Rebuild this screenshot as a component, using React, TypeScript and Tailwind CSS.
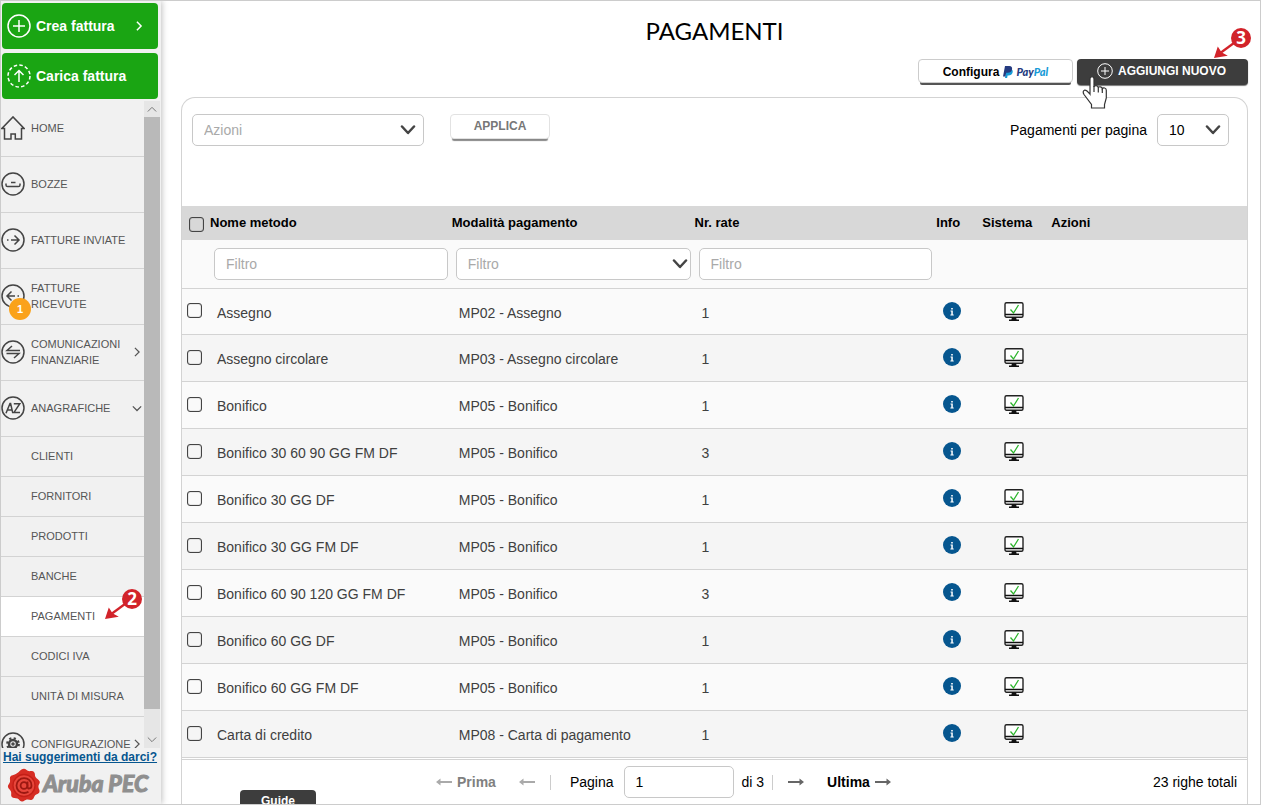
import { useState } from "react";
import type { ReactNode } from "react";

const payments = [
  { id: 1, name: "Assegno", mode: "MP02 - Assegno", rate: 1 },
  { id: 2, name: "Assegno circolare", mode: "MP03 - Assegno circolare", rate: 1 },
  { id: 3, name: "Bonifico", mode: "MP05 - Bonifico", rate: 1 },
  { id: 4, name: "Bonifico 30 60 90 GG FM DF", mode: "MP05 - Bonifico", rate: 3 },
  { id: 5, name: "Bonifico 30 GG DF", mode: "MP05 - Bonifico", rate: 1 },
  { id: 6, name: "Bonifico 30 GG FM DF", mode: "MP05 - Bonifico", rate: 1 },
  { id: 7, name: "Bonifico 60 90 120 GG FM DF", mode: "MP05 - Bonifico", rate: 3 },
  { id: 8, name: "Bonifico 60 GG DF", mode: "MP05 - Bonifico", rate: 1 },
  { id: 9, name: "Bonifico 60 GG FM DF", mode: "MP05 - Bonifico", rate: 1 },
  { id: 10, name: "Carta di credito", mode: "MP08 - Carta di pagamento", rate: 1 },
];

const subItems = [
  "CLIENTI",
  "FORNITORI",
  "PRODOTTI",
  "BANCHE",
  "PAGAMENTI",
  "CODICI IVA",
  "UNITÀ DI MISURA",
];

const fieldClass =
  "h-8 w-full rounded-[5px] border border-[#c8c8c8] bg-white px-[11px] text-sm text-black outline-none placeholder:text-[#a9a9a9]";

const checkClass =
  "block size-[15px] appearance-none rounded-[3px] border border-[#444] shadow-[inset_0_0_1px_#444] checked:bg-[#505050]";

function Circle({ children }: { children: ReactNode }) {
  return (
    <svg viewBox="0 0 24 24" className="size-6" fill="none" stroke="#444" strokeWidth="1.5">
      <circle cx="12" cy="12" r="11" />
      {children}
    </svg>
  );
}

function HomeIcon() {
  return (
    <svg viewBox="0 0 24 24" className="size-6" fill="none" stroke="#444" strokeWidth="1.5">
      <path d="M3.5 12.5H.9L12 .9l11.1 11.6h-2.6v10.6h-6.2v-5.2H10v5.2H3.5z" />
    </svg>
  );
}

function BozzeIcon() {
  return (
    <Circle>
      <path d="M5 11.5v1.4c0 1 .6 1.6 1.6 1.6h10.8c1 0 1.6-.6 1.6-1.6v-1.4" />
      <path d="M10 10.5h4.5" />
    </Circle>
  );
}

function InviateIcon() {
  return (
    <Circle>
      <path d="M10 12h8M13.5 7.5 18 12l-4.500 4.500M6 12h1.500" />
    </Circle>
  );
}

function RicevuteIcon() {
  return (
    <Circle>
      <path d="M14 12H6M10.500 7.500 6 12l4.500 4.500M16.500 12H18" />
    </Circle>
  );
}

function ComunicazioniIcon() {
  return (
    <Circle>
      <path d="M19 10.500H6l5-4.500M5.500 13.500H18l-5 4.500" />
    </Circle>
  );
}

function AnagraficheIcon() {
  return (
    <Circle>
      <path d="M5 17.200 9 7.500h.6l2.200 9.700M6.500 14h4.600M12.800 7.700h6L13 16.400h6" />
    </Circle>
  );
}

function GearIcon() {
  return (
    <Circle>
      <circle cx="12" cy="12" r="4" strokeWidth="2.500" />
      <circle cx="12" cy="12" r="5.800" strokeWidth="2.200" strokeDasharray="2.200 2.355" />
      <circle cx="12" cy="12" r="1" />
    </Circle>
  );
}

function Chevron({ className, d = "m1 3 5 5 5-5", width = 1.5 }: { className?: string; d?: string; width?: number }) {
  return (
    <svg viewBox="0 0 12 12" className={className} fill="none" stroke="currentColor" strokeWidth={width}>
      <path d={d} />
    </svg>
  );
}

function SelectArrow({ className }: { className: string }) {
  return (
    <svg
      viewBox="0 0 16 10"
      className={`pointer-events-none absolute top-[11px] h-[10px] w-4 ${className}`}
      fill="none"
      stroke="#444"
      strokeWidth="2.500"
      strokeLinecap="round"
      strokeLinejoin="round"
    >
      <path d="m2 1.500 6 6.500 6-6.500" />
    </svg>
  );
}

function Arrow({ left = false, color }: { left?: boolean; color: string }) {
  return (
    <svg viewBox="0 0 16 8" className="h-2 w-4" fill={color}>
      {left ? <path d="M0 4 4.500.5v2.400H16v2.200H4.500v2.400z" /> : <path d="m16 4-4.500-3.500v2.400H0v2.200h11.500v2.400z" />}
    </svg>
  );
}

function Marker({ label, className }: { label: string; className: string }) {
  return (
    <svg viewBox="0 0 40 34" className={`pointer-events-none absolute z-10 h-[34px] w-10 ${className}`}>
      <path d="M23 15.500 8 26.500" stroke="#d2232a" strokeWidth="2.200" />
      <path d="M1 32 4.800 20.500 8.500 26.200 14.800 29.800z" fill="#d2232a" />
      <circle cx="28" cy="12" r="10" fill="#d2232a" />
      <text x="28" y="18" textAnchor="middle" fill="#fff" fontSize="17" fontWeight="700" fontFamily="'Open Sans', sans-serif">
        {label}
      </text>
    </svg>
  );
}

function HandCursor() {
  return (
    <svg
      viewBox="0 0 26 33"
      className="pointer-events-none absolute top-[17px] left-[5px] z-10 h-[33px] w-[26px]"
      fill="#fff"
      stroke="#333"
      strokeWidth="1.200"
    >
      <path d="M9.500 32v-3.500L2 18.500c-1.300-2-1-3.800.5-4.300 1.600-.4 3 .8 5.500 4V3c0-3 4-3 4 0v8c.4-2 4-2 4.300.7.600-1.500 3.800-1.200 4 1 .8-1.300 4-1 4 1.500V22L22.500 28.500V32z" />
      <path d="M12 10v6M16.300 11.500V16.500M20.300 12.700V17" fill="none" />
    </svg>
  );
}

function PayPalMark() {
  return (
    <svg viewBox="0 0 10 12" className="h-3 w-[10px]">
      <path d="M3.500 3h4.800c1.300.7 1.700 2 1.300 3.500-.5 2-2 3-4.200 3h-.8L4.100 12H2z" fill="#179bd7" />
      <path d="M2 0h4.300c2.200 0 3.200 1.300 2.700 3.400C8.500 5.700 7 6.700 4.700 6.700H3.200L2.400 10.500H0z" fill="#253b80" />
    </svg>
  );
}

function InfoIcon() {
  return (
    <svg viewBox="0 0 18 18" className="size-[18px]">
      <circle cx="9" cy="9" r="9" fill="#06568f" />
      <path d="M8.200 6h1.600v1.400H8.200zM7.500 8.500H9.800v4h.9v.9H7.400v-.9h.9V9.400h-.8z" fill="#fff" />
    </svg>
  );
}

function MonitorIcon() {
  return (
    <svg viewBox="0 0 20 20" className="size-5" fill="none">
      <rect x="1" y="1.700" width="18" height="14.600" rx="1.500" fill="#fff" stroke="#222" strokeWidth="1.400" />
      <path d="M1 13.500h18" stroke="#111" strokeWidth="1.500" />
      <path d="M8 16.300h4l.6 2.200H15V20H5v-1.500h2.400z" fill="#111" />
      <path d="m6.500 8.500 3 3.500 5-8" stroke="#2db52d" strokeWidth="1.300" />
    </svg>
  );
}

function SealLogo() {
  return (
    <svg viewBox="0 0 34 34" className="size-[34px]" fill="none">
      <path
        d="M17 .8c2 0 2.600 2 4.600 2.300 2 .2 4-.6 5.400.9 1.500 1.500.5 3.300 1.500 5 1 1.900 3.800 2.600 4.300 4.800.4 1.800-1.500 2.800-1.400 4.900 0 2 1.800 3.500 1 5.500-.8 1.900-2.900 1.500-4.300 3.100-1.300 1.500-1.100 3.800-3.200 4.500-2 .7-3.200-.8-5.100-.3-1.900.4-3 2.300-5.100 1.900-2.100-.3-2.300-2.200-4.200-3-1.900-.9-4.300.2-5.700-1.500-1.300-1.600-.1-3.400-.8-5.400-.7-1.800-3-2.700-3.100-4.900-.1-2 1.800-2.800 2.100-4.800.4-2-.8-3.900.6-5.600 1.200-1.500 3-.8 4.700-2C12.300 5 13 .8 17 .8z"
        fill="#d62d24"
      />
      <circle cx="17" cy="17.500" r="11" fill="#e8463b" stroke="#c41f17" strokeWidth="1.300" />
      <circle cx="17" cy="17.500" r="3.400" stroke="#9c1811" strokeWidth="1.800" />
      <path
        d="M20.500 13.500v5.200c0 2.800 4 2.300 4-1.300 0-4.300-3.200-7.200-7.400-7.200-4.300 0-7.600 3.200-7.600 7.400s3.200 7.400 7.500 7.400c1.800 0 3.300-.5 4.500-1.300"
        stroke="#9c1811"
        strokeWidth="1.800"
      />
    </svg>
  );
}

function NavItem({ icon, label, chevron, badge }: { icon: ReactNode; label: string; chevron?: string; badge?: string }) {
  return (
    <li>
      <a href="#" className="flex h-14 items-center border-b border-[#d3d3d3] pb-0.5">
        <span className="relative mr-1.5 shrink-0">
          {icon}
          {badge && (
            <span className="absolute top-[14px] left-2 flex size-[22px] items-center justify-center rounded-full bg-[#faa21b] text-[11px] font-bold text-white">
              {badge}
            </span>
          )}
        </span>
        <span className="max-w-[100px]">{label}</span>
        {chevron && (
          <Chevron
            className="mr-0.5 ml-auto size-[10px] shrink-0"
            d={chevron === "down" ? "m1 4 5 5 5-5" : "m3.500 1 5 5-5 5"}
          />
        )}
      </a>
    </li>
  );
}

function Sidebar() {
  return (
    <aside className="z-10 flex w-40 shrink-0 flex-col bg-[#f1f1f1] shadow-[1px_0_6px_rgba(0,0,0,0.25)]">
      <div className="flex flex-col gap-1 pt-0.5 pr-[3px] pb-0.5 pl-px">
        <button className="flex h-[46px] items-center gap-1 rounded-[4px] bg-[#1aa513] pr-3.5 pl-[5px] text-sm font-bold text-white">
          <svg viewBox="0 0 24 24" className="size-6" fill="none" stroke="currentColor" strokeWidth="1.500">
            <circle cx="12" cy="12" r="11" />
            <path d="M12 6v12M6 12h12" />
          </svg>
          <span className="flex-1 pl-px text-left">Crea fattura</span>
          <Chevron className="size-[10px]" d="m3.500 1 5 5-5 5" width={1.8} />
        </button>
        <button className="flex h-[46px] items-center gap-1 rounded-[4px] bg-[#1aa513] pr-3.5 pl-[5px] text-sm font-bold text-white">
          <svg viewBox="0 0 24 24" className="size-6" fill="none" stroke="currentColor" strokeWidth="1.500">
            <circle cx="12" cy="12" r="11" strokeDasharray="3.500 2.260" />
            <path d="M12 18V6.500M7.500 11 12 6.500l4.500 4.500" />
          </svg>
          <span className="flex-1 pl-px text-left">Carica fattura</span>
        </button>
      </div>

      <div className="flex min-h-0 flex-1">
        <nav className="flex-1 overflow-hidden text-[11px] leading-4 text-[#555]">
          <ul>
            <NavItem icon={<HomeIcon />} label="HOME" />
            <NavItem icon={<BozzeIcon />} label="BOZZE" />
            <NavItem icon={<InviateIcon />} label="FATTURE INVIATE" />
            <NavItem icon={<RicevuteIcon />} label="FATTURE RICEVUTE" badge="1" />
            <NavItem icon={<ComunicazioniIcon />} label="COMUNICAZIONI FINANZIARIE" chevron="right" />
            <NavItem icon={<AnagraficheIcon />} label="ANAGRAFICHE" chevron="down" />
            {subItems.map((item) => (
              <li key={item} className="relative">
                <a
                  href="#"
                  className={`flex h-10 items-center border-b border-[#d3d3d3] pb-0.5 pl-[30px] ${item === "PAGAMENTI" ? "bg-white" : ""}`}
                >
                  {item}
                </a>
                {item === "PAGAMENTI" && <Marker label="2" className="-top-[10px] left-[103px]" />}
              </li>
            ))}
            <NavItem icon={<GearIcon />} label="CONFIGURAZIONE" chevron="right" />
          </ul>
        </nav>
        <div className="mr-px flex w-4 flex-col bg-[#e6e6e6] text-[#777]">
          <span className="flex h-4 items-center justify-center">
            <Chevron className="size-[10px]" d="m1 9 5-5 5 5" width={1.2} />
          </span>
          <span className="flex-1 bg-[#b9b9b9]" />
          <span className="flex h-[39px] items-end justify-center pb-[3px]">
            <Chevron className="size-[10px]" width={1.2} />
          </span>
        </div>
      </div>

      <div className="flex h-14 flex-col pt-px">
        <a href="#" className="pl-0.5 text-xs leading-4 font-bold whitespace-nowrap text-[#06568f] underline">
          Hai suggerimenti da darci?
        </a>
        <div className="flex items-center gap-0.5 pt-[3px] pl-1.5">
          <SealLogo />
          <span className="pb-1 font-['Lato',sans-serif] text-[23px] leading-6 font-black whitespace-nowrap text-[#8f8f8f] italic [-webkit-text-stroke:1px_#8f8f8f]">
            Aruba PEC
          </span>
        </div>
      </div>
    </aside>
  );
}

export default function App() {
  const [selected, setSelected] = useState<number[]>([]);
  const [page, setPage] = useState("1");

  const toggle = (id: number) => {
    setSelected((prev) => (prev.includes(id) ? prev.filter((x) => x !== id) : [...prev, id]));
  };

  return (
    <div className="flex h-screen overflow-hidden border border-[#ccc] bg-white font-['Liberation_Sans',Arial,sans-serif] text-sm text-black">
      <Sidebar />

      <main className="flex min-w-0 flex-1 flex-col pr-3 pl-5">
        <h1 className="pt-3.5 text-center font-['Lato',sans-serif] text-2xl leading-8">PAGAMENTI</h1>

        <div className="flex justify-end gap-1 pt-3">
          <button className="flex h-6 w-[155px] items-center justify-center gap-1 rounded-[4px] border border-[#ccc] bg-white pt-0.5 text-xs font-bold shadow-[0_4px_0_-2px_#555]">
            Configura
            <span className="flex items-center gap-[3px]">
              <PayPalMark />
              <span className="font-['Lato',sans-serif] text-[11px] font-black text-[#253b80] italic">
                Pay<span className="text-[#179bd7]">Pal</span>
              </span>
            </span>
          </button>
          <div className="relative">
            <button className="flex h-[26px] w-[171px] items-center justify-center gap-[5px] rounded-[4px] bg-[#3d3d3d] pr-0.5 pb-0.5 text-xs font-bold text-white shadow-[0_1px_1px_#777]">
              <svg viewBox="0 0 16 16" className="size-4" fill="none" stroke="currentColor">
                <circle cx="8" cy="8" r="7.300" />
                <path d="M8 4v8M4 8h8" />
              </svg>
              AGGIUNGI NUOVO
            </button>
            <Marker label="3" className="-top-[33px] left-[136px]" />
            <HandCursor />
          </div>
        </div>

        <section className="mt-3 flex min-h-0 flex-1 flex-col rounded-t-[14px] border border-b-0 border-[#d3d3d3]">
          <div className="flex h-[108px] shrink-0 items-start pt-4 pr-[18px] pl-[10px]">
            <div className="relative w-[232px]">
              <select aria-label="Azioni" className={`${fieldClass} appearance-none text-[#a9a9a9]!`}>
                <option>Azioni</option>
              </select>
              <SelectArrow className="right-2" />
            </div>
            <button className="ml-[26px] h-[25px] w-[100px] rounded-[4px] border border-[#e2e2e2] bg-white pb-0.5 text-xs font-bold text-[#777] shadow-[0_4px_1px_-2px_#888]">
              APPLICA
            </button>
            <div className="ml-auto flex items-center gap-[10px]">
              <label htmlFor="per-page">Pagamenti per pagina</label>
              <div className="relative w-[72px]">
                <select id="per-page" className={`${fieldClass} appearance-none`}>
                  <option>10</option>
                  <option>25</option>
                </select>
                <SelectArrow className="right-2" />
              </div>
            </div>
          </div>

          <table className="w-full table-fixed border-separate border-spacing-0">
            <colgroup>
              <col className="w-7" />
              <col className="w-[22.700%]" />
              <col className="w-[22.800%]" />
              <col className="w-[22.700%]" />
              <col className="w-[46px]" />
              <col className="w-[69px]" />
              <col />
            </colgroup>
            <thead className="bg-[#d8d8d8] text-left text-[13px] font-bold">
              <tr className="h-[34px]">
                <th className="pt-0.5 pl-[7px]">
                  <input
                    type="checkbox"
                    aria-label="Seleziona tutti"
                    className={checkClass}
                    checked={selected.length === payments.length}
                    onChange={(e) => setSelected(e.target.checked ? payments.map((p) => p.id) : [])}
                  />
                </th>
                <th>Nome metodo</th>
                <th>Modalità pagamento</th>
                <th>Nr. rate</th>
                <th>Info</th>
                <th>Sistema</th>
                <th>Azioni</th>
              </tr>
            </thead>
            <tbody className="text-[#404040]">
              <tr className="h-12 bg-[#fafafa]">
                <td />
                <td className="px-1">
                  <input aria-label="Filtro nome metodo" placeholder="Filtro" className={fieldClass} />
                </td>
                <td className="px-1">
                  <div className="relative">
                    <select aria-label="Filtro modalità pagamento" className={`${fieldClass} appearance-none text-[#a9a9a9]!`}>
                      <option>Filtro</option>
                    </select>
                    <SelectArrow className="right-[3px]" />
                  </div>
                </td>
                <td className="px-1">
                  <input aria-label="Filtro numero rate" placeholder="Filtro" className={fieldClass} />
                </td>
                <td />
                <td />
                <td />
              </tr>
              {payments.map((p) => (
                <tr
                  key={p.id}
                  className="h-[47px] even:bg-[#fafafa] odd:bg-[#f5f5f5] *:border-b *:border-[#d3d3d3] nth-2:*:border-t"
                >
                  <td className="pb-0.5 pl-[5px]">
                    <input
                      type="checkbox"
                      aria-label={p.name}
                      className={checkClass}
                      checked={selected.includes(p.id)}
                      onChange={() => toggle(p.id)}
                    />
                  </td>
                  <td className="pt-0.5 pl-[7px]">{p.name}</td>
                  <td className="pt-0.5 pl-[7px]">{p.mode}</td>
                  <td className="pt-0.5 pl-[7px]">{p.rate}</td>
                  <td className="pb-0.5 pl-[7px]">
                    <button aria-label="Info" className="block">
                      <InfoIcon />
                    </button>
                  </td>
                  <td className="pb-0.5 pl-[22px]">
                    <MonitorIcon />
                  </td>
                  <td />
                </tr>
              ))}
            </tbody>
          </table>

          <footer className="mt-px flex h-[45px] shrink-0 items-center overflow-hidden border-t border-[#d3d3d3] pr-[10px]">
            <button className="mt-[30px] ml-[58px] h-6 w-[76px] shrink-0 self-start rounded-[4px] bg-[#3d3d3d] pb-0.5 text-xs font-bold text-white">
              Guide
            </button>
            <button className="ml-[120px] flex items-center gap-[5px] font-bold text-[#808080]">
              <Arrow left color="#aaa" />
              Prima
            </button>
            <button aria-label="Pagina precedente" className="ml-[23px]">
              <Arrow left color="#aaa" />
            </button>
            <span className="mx-[15px] h-[15px] w-px shrink-0 bg-[#ccc]" />
            <label htmlFor="page" className="ml-1 pr-[10px]">
              Pagina
            </label>
            <input id="page" className={`${fieldClass} w-[110px]!`} value={page} onChange={(e) => setPage(e.target.value)} />
            <span className="ml-2 whitespace-nowrap">di 3</span>
            <span className="mr-[15px] ml-2 h-[15px] w-px shrink-0 bg-[#ccc]" />
            <button aria-label="Pagina successiva">
              <Arrow color="#666" />
            </button>
            <button className="ml-[23px] flex items-center gap-[5px] font-bold">
              Ultima
              <Arrow color="#666" />
            </button>
            <span className="ml-auto whitespace-nowrap">23 righe totali</span>
          </footer>
        </section>
      </main>
    </div>
  );
}
